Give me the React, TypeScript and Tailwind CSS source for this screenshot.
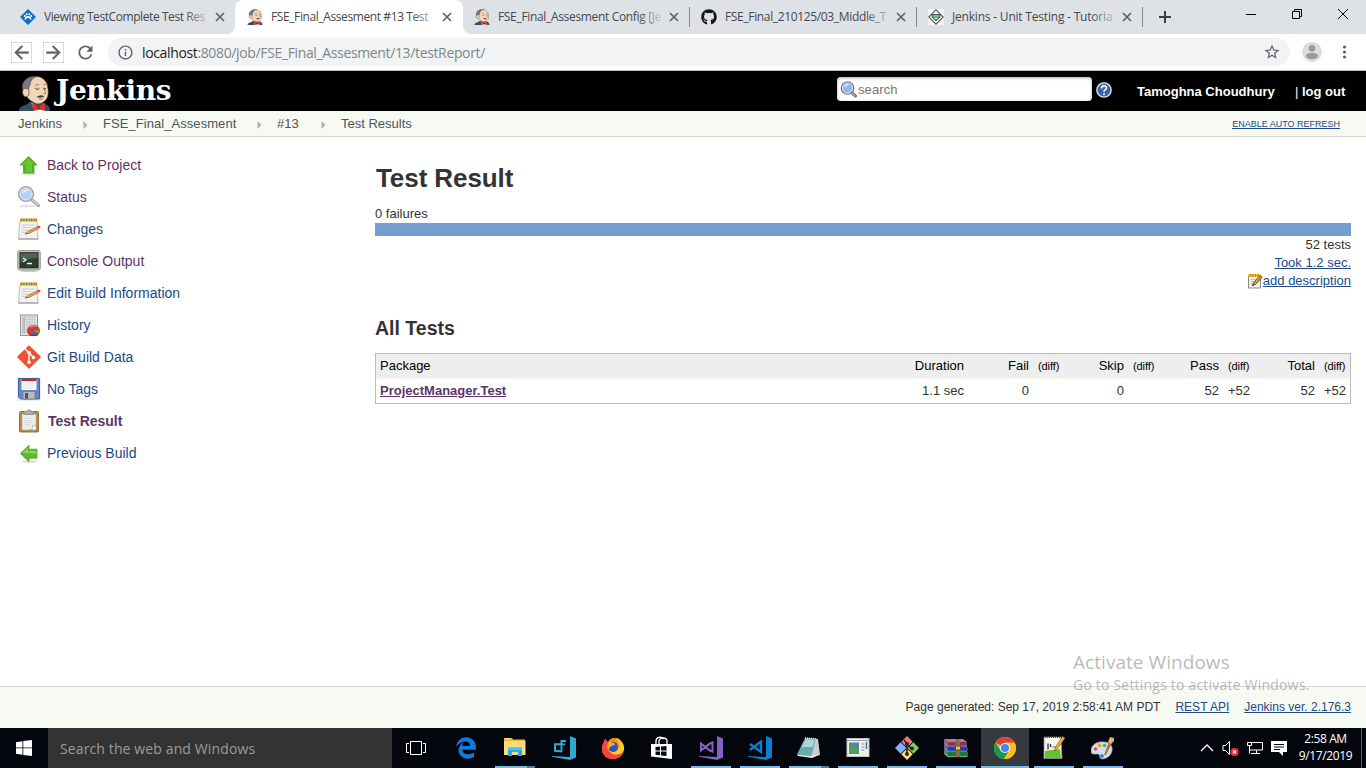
import React from "react";
import { FaGithub, FaEdgeLegacy } from "react-icons/fa";
import { MdRefresh, MdArrowBack, MdArrowForward, MdStarBorder, MdInfoOutline } from "react-icons/md";

const CloseX = ({ className = "" }: { className?: string }) => (
  <svg className={`shrink-0 ${className}`} width="10" height="10" viewBox="0 0 10 10" stroke="#5f6368" strokeWidth="1.7">
    <path d="M1 1l8 8M9 1l-8 8" />
  </svg>
);

const JenkinsFace = ({ w, h }: { w: number; h: number }) => (
  <svg width={w} height={h} viewBox="0 0 34 36" className="shrink-0" preserveAspectRatio="none">
    <path d="M1 36c0-3 3-5.500 7-6l5-3.500 13 1.500c4 1 7 3 7 8z" fill="#335061" />
    <path d="M10 23C5 16 6 6 12 2.500c7-3 15-.5 18 6.500 1.500 6 2 12-1 15.500-3 4-8 5.500-12 3.500-3-1.500-5-3-7-5z" fill="#f0d6b7" stroke="#3a302c" strokeWidth=".6" />
    <path d="M6 17C3 13 4 7 9 3.500c3-2 8-2.500 12-2-5 .5-8 3-8.500 8C12 12 10.500 12 10.500 17z" fill="#7b787b" stroke="#3a302c" strokeWidth=".5" />
    <path d="M7 13.500c-3.500 1-3 7.500 1.200 8.500l3-2v-5c-.7-1.500-2.700-2-4.200-1.500z" fill="#f0d6b7" stroke="#3a302c" strokeWidth=".6" />
    <path d="M17.500 10.500c1.500-1.200 3-1.200 4.300-.3M26 10c1-.9 2.300-.9 3.200 0M27 13.500c0 2.500 2.300 3.700 1.500 4.900-.7.8-2 .3-2.500.2" fill="none" stroke="#6b594c" strokeWidth=".7" />
    <path d="M17.800 13.200c1.300 1.400 3 1.400 4.200.2M26 13c.9 1.200 2.200 1.200 3 .2" fill="none" stroke="#2c2523" strokeWidth="1" />
    <path d="M19 21.500c1.500.2 3-1.500 5-1.300 1.300.1 2 .8 3.200.8-1 1.900-6 2.500-8.200.5z" fill="#4a3f40" />
    <path d="M21.500 23.800c1.500.8 3 .8 4-.2" fill="none" stroke="#81504c" strokeWidth=".8" />
    <path d="M14 28l7 3.500 6-3 1 7.500H16z" fill="#f7f4f1" />
    <path d="M15 29l6 2.300L28 28.500l.5 7-6.500-1.500L15.500 35.500z" fill="#e0332c" stroke="#8c1a1d" strokeWidth=".6" />
    <path d="M20 30.500h3v4h-3z" fill="#b5221f" />
  </svg>
);

const Diamond = () => (
  <svg width="16" height="16" viewBox="0 0 16 16" className="shrink-0">
    <path d="M8 0l8 8-8 8-8-8z" fill="#0c6fc0" />
    <path d="M4.500 10.500c0-2 1.500-3.500 3.500-3.500s3.500 1.500 3.500 3.500H9.800a1.800 1.800 0 0 0-3.600 0z" fill="#fff" />
    <circle cx="4.800" cy="7" r="1" fill="#fff" /><circle cx="6.700" cy="5.300" r="1" fill="#fff" /><circle cx="9.300" cy="5.300" r="1" fill="#fff" /><circle cx="11.200" cy="7" r="1" fill="#fff" />
  </svg>
);

const TutorialIcon = () => (
  <svg width="16" height="16" viewBox="0 0 16 16" className="shrink-0">
    <rect width="16" height="16" fill="#f4f4f4" />
    <path d="M8 .8L15.200 8 8 15.200.8 8z" fill="#fff" stroke="#555" strokeWidth="1.100" />
    <path d="M4 5.500h8v2.500L8 12 4 8z" fill="#5c8f6c" stroke="#2c4a38" strokeWidth=".8" />
    <path d="M5.500 7h2M8.500 7h2M6.500 9.300h3" stroke="#e8f2ea" strokeWidth="1" />
  </svg>
);

type TabProps = { icon: React.ReactNode; title: string; outer: string; text: string; track: string; fade: string };
const Tab = ({ icon, title, outer, text, track, fade }: TabProps) => (
  <div className={`flex h-[34px] shrink-0 items-center ${outer}`}>
    {icon}
    <div className={`relative ml-2 h-5 whitespace-nowrap text-[12px] leading-5 text-[#45494d] ${text} ${track}`}>
      {title}
      <span className={`absolute right-0 top-0 h-5 w-6 bg-linear-to-r from-transparent ${fade}`} />
    </div>
    <CloseX className="ml-[7px]" />
  </div>
);

const Up = () => (
  <svg width="24" height="24" viewBox="0 0 24 24">
    <ellipse cx="12" cy="21" rx="8" ry="1.500" fill="#ddd" />
    <path d="M11.500 3.500L20 12h-3v8H6.500v-8H3z" fill="#52b01d" stroke="#4ba41c" strokeWidth=".8" />
    <path d="M11.500 5L17 11h-2v8H8.500v-7l-4-.8z" fill="#86d64b" opacity=".5" />
  </svg>
);
const Left = () => (
  <svg width="24" height="24" viewBox="0 0 24 24">
    <ellipse cx="13" cy="20.500" rx="8" ry="1.300" fill="#ddd" />
    <path d="M3.300 12.500l8.700-8.300v4h8v9h-8v3.500z" fill="#5fb52c" stroke="#57a32a" strokeWidth=".8" />
    <path d="M5 12l6-5.500V10h8.500v2.500z" fill="#9bdc6c" opacity=".75" />
  </svg>
);
const Magnifier = () => (
  <svg width="24" height="24" viewBox="0 0 24 24" className="shrink-0">
    <ellipse cx="10" cy="21" rx="8" ry="1.400" fill="#e4e4e4" />
    <path d="M14.500 14.500l7 6" stroke="#a2a3a0" strokeWidth="3.400" strokeLinecap="round" />
    <path d="M15.500 15l5.500 4.800" stroke="#dadad8" strokeWidth="1.400" strokeLinecap="round" />
    <circle cx="9" cy="9" r="7.300" fill="#b3d1f3" stroke="#a3a6a3" strokeWidth="1.600" />
    <circle cx="9" cy="9" r="6" fill="none" stroke="#e5effb" strokeWidth="1" />
    <path d="M5 9c0-3 2-4.500 5-4.500 1 0 2 .5 2.500 1C9 6 7 7 5 9z" fill="#e3effd" />
  </svg>
);
const SearchGlass = () => (
  <svg width="17" height="17" viewBox="0 0 17 17" className="shrink-0">
    <path d="M11.500 11.500l4 3.500" stroke="#777" strokeWidth="3" strokeLinecap="round" />
    <path d="M12 12l3 2.600" stroke="#ccc" strokeWidth="1" />
    <circle cx="7.500" cy="7" r="6.200" fill="#8fbaf0" stroke="#777a7b" strokeWidth="1.300" />
    <circle cx="7.500" cy="7" r="5.100" fill="none" stroke="#dbe8f8" strokeWidth=".9" />
    <path d="M4 6.500c0-2 2-3.500 4.500-3.500C9 4.500 6 4.500 4 6.500z" fill="#dbeafd" />
  </svg>
);
const Notepad = () => (
  <svg width="24" height="24" viewBox="0 0 24 24" className="shrink-0">
    <path d="M3 3.500h17l1 18.500H1.500z" fill="#f1f1ef" stroke="#bdbfba" strokeWidth="1" />
    <path d="M1.500 22h20" stroke="#92948f" strokeWidth="1" />
    <path d="M3 1.500h17v2.800H3z" fill="#c5ad45" />
    <path d="M4.500 1.500v3M7 1.500v3M9.500 1.500v3M12 1.500v3M14.500 1.500v3M17 1.500v3M19.300 1.500v3" stroke="#85732c" strokeWidth=".8" />
    <path d="M5 8h12M5 10.500h9M5 13h6M4.500 15.500h4" stroke="#cfd1cd" />
    <path d="M8.500 16.800l2.700-2.600L20.500 9.500l1.200 1.900-9.400 5z" fill="#dfa050" stroke="#9f6d2c" strokeWidth=".6" />
    <path d="M20.300 9.600l1.700-.9c1.300-.2 2 1 1.200 1.900l-1.700.9z" fill="#e0452f" />
    <path d="M8 17.200l1.400-1.400.8 1z" fill="#222" />
  </svg>
);
const SmallNotepad = () => (
  <svg width="16" height="16" viewBox="0 0 16 16" className="shrink-0">
    <path d="M1.500 2.500h12v12.500h-12z" fill="#efefee" stroke="#8a8c88" />
    <path d="M1.500 1h12v3h-12z" fill="#f0bd27" />
    <path d="M3.500 1v2.500M6 1v2.500M8.500 1v2.500M11 1v2.500" stroke="#a77c10" />
    <path d="M3.500 6.500h7M3.500 8.500h5M3.500 10.500h3" stroke="#c4c5c2" />
    <path d="M5.500 12.500l1.500-3.300L13 2.500l2.200 1.800-6.500 7z" fill="#d99c3b" stroke="#503b17" strokeWidth=".8" />
    <path d="M5 13l1-2 1 1z" fill="#111" />
  </svg>
);
const Console = () => (
  <svg width="24" height="24" viewBox="0 0 24 24">
    <ellipse cx="12" cy="22" rx="9" ry="1.200" fill="#ccc" />
    <rect x=".7" y="1.500" width="22.600" height="19.500" rx="2" fill="#c3c4bc" stroke="#9b9c96" />
    <rect x="3" y="3.800" width="18" height="15" fill="#2c3d31" stroke="#161f19" />
    <path d="M3.500 4.300h17v5C14 9 8 11 3.500 14z" fill="#50634f" />
    <path d="M6 9l3 2-3 2M10 14.500h5" fill="none" stroke="#e9f6e5" strokeWidth="1.300" />
  </svg>
);
const History = () => (
  <svg width="24" height="24" viewBox="0 0 24 24">
    <rect x="3.500" y="2" width="17" height="20.500" fill="#e6e7e4" stroke="#939590" />
    <path d="M5 4h14M5 6.500h14M5 9h14M5 11.500h14M5 14h7M5 16.500h5M5 19h5M7.500 3v18M10 3v18M12.500 3v10M15 3v9M17.500 3v9" stroke="#c3c5c1" strokeWidth=".8" />
    <path d="M5 4v16.500h3V4z" fill="#999b97" opacity=".35" />
    <ellipse cx="16.500" cy="18.200" rx="6.300" ry="5" fill="#a51313" />
    <ellipse cx="16.500" cy="17" rx="6.300" ry="5" fill="#dd3a37" />
    <path d="M12 14.500c2-2.500 6-2.500 8-1-2 0-5 .5-8 1z" fill="#f08a86" />
    <path d="M16 17.500l4 3.500c-2 1.500-3.500 1.500-5 1z" fill="#3c68b0" /><path d="M16.500 17.300h6c0 1.500-.8 2.500-1.800 3.200z" fill="#69a83c" />
  </svg>
);
const GitIcon = () => (
  <svg width="24" height="24" viewBox="0 0 24 24">
    <path d="M12 .8L23.200 12 12 23.200.8 12z" fill="#f05133" stroke="#f05133" strokeWidth="1.200" strokeLinejoin="round" />
    <path d="M8 3.800l4 4.200v9.500M12 8l4.300 4.300" stroke="#fff" strokeWidth="1.400" fill="none" />
    <circle cx="12" cy="7.800" r="1.800" fill="#fff" /><circle cx="12" cy="17.300" r="1.800" fill="#fff" /><circle cx="16.500" cy="12.500" r="1.800" fill="#fff" />
  </svg>
);
const Floppy = () => (
  <svg width="24" height="24" viewBox="0 0 24 24">
    <rect width="24" height="24" fill="#eeeef1" />
    <path d="M1.500 1.500h21v20.500H3.500l-2-2z" fill="#6488c6" stroke="#4560a0" />
    <rect x="4.500" y="2" width="15" height="11" fill="#fafafa" /><rect x="4.500" y="2" width="15" height="2" fill="#ea1d12" />
    <path d="M6 7h12M6 9h12M6 11h12" stroke="#e2e2e2" strokeWidth=".8" />
    <rect x="6" y="14.500" width="12" height="7.500" fill="#b9bcb8" stroke="#777" strokeWidth=".7" /><rect x="8" y="16" width="3" height="5.500" fill="#39558c" />
  </svg>
);
const Clipboard = () => (
  <svg width="24" height="24" viewBox="0 0 24 24">
    <rect x="2.500" y="2.500" width="19" height="20.500" rx="1" fill="#b98a3c" stroke="#8b5e18" strokeWidth=".8" />
    <rect x="5" y="5" width="14" height="16" fill="#ecedea" stroke="#aaa" strokeWidth=".6" />
    <path d="M19 16v5h-6.500c3 0 3.500-1 3-4.500 1.500 1 3 .4 3.500-.5z" fill="#fff" stroke="#999" strokeWidth=".6" />
    <path d="M7.500 9.500h8M7.500 11.500h8M7.500 13.500h7M7.500 15.500h6" stroke="#d6d7d4" strokeWidth=".8" />
    <path d="M7 5.500V2.500h3c0-2.500 4-2.500 4 0h3v3z" fill="#a9aca6" stroke="#8a8d86" strokeWidth=".8" />
  </svg>
);

const tasks = [
  { icon: <Up />, label: "Back to Project", style: "text-[#5c3566]" },
  { icon: <Magnifier />, label: "Status", style: "text-[#5c3566]" },
  { icon: <Notepad />, label: "Changes", style: "text-[#204a87]" },
  { icon: <Console />, label: "Console Output", style: "text-[#5c3566]" },
  { icon: <Notepad />, label: "Edit Build Information", style: "text-[#204a87]" },
  { icon: <History />, label: "History", style: "text-[#204a87]" },
  { icon: <GitIcon />, label: "Git Build Data", style: "text-[#204a87]" },
  { icon: <Floppy />, label: "No Tags", style: "text-[#204a87]" },
  { icon: <Clipboard />, label: "Test Result", style: "font-bold text-[#5c3566] pl-px" },
  { icon: <Left />, label: "Previous Build", style: "text-[#204a87]" },
];

const Crumb = () => (
  <svg width="5" height="8" viewBox="0 0 5 8" className="mt-0.5 shrink-0"><path d="M.5 0L4.500 4 .5 8z" fill="#b0b2ad" /></svg>
);

const S = ({ children }: { children: React.ReactNode }) => <svg width="24" height="24" viewBox="0 0 24 24">{children}</svg>;

const apps: { icon: React.ReactNode; bar: "none" | "one" | "two" | "active" }[] = [
  { bar: "none", icon: <FaEdgeLegacy size={22} color="#0f7bdc" /> },
  { bar: "two", icon: <S><path d="M1 2h8l1 1.500h12V19H1z" fill="#e8b536" /><path d="M1 5h21.500v14H1z" fill="#fddc7c" /><path d="M2 2.800h5" stroke="#fff3c4" /><path d="M5 11.500h14V20h-4v-4H9v4H5z" fill="#29a9e6" /><path d="M5 11.500h14V14H5z" fill="#4cc3f3" /></S> },
  { bar: "none", icon: <S><path d="M18 0l6 2.500v19L18 24 0 20.800v-.7l18 1z" fill="#31a8cf" /><path d="M9.500 8.300H3v6.500l6.500.5V5H14" fill="none" stroke="#31a8cf" strokeWidth="2" /><path d="M9 8.300h4" stroke="#31a8cf" strokeWidth="1.800" /></S> },
  { bar: "none", icon: <S>
    <path d="M2 8l2-5 3 3c2-4 6-5 9-3l1-1c4 3 7 7 6 12-1 6-6 9-11 9S1 19 1 14c0-2 0-4 1-6z" fill="#ff8a16" />
    <path d="M2 8l2-5 3 4c-3 4 0 10 5 10 3 0 5-2 6-4l3 4c-2 4-6 6-10 6-6 0-10-5-10-10z" fill="#f8423f" />
    <circle cx="12" cy="11" r="5" fill="#2856c8" /><path d="M8 6l5 1 1 2-4 1-3 4c-1-3 0-6 1-8z" fill="#ffac25" />
    <path d="M14 1.500c4 4 5 8 3 12-1 3-6 4-9 1 5 8 15 3 15-2 0-5-4-9-9-11z" fill="#ffcb2b" />
  </S> },
  { bar: "none", icon: <S><path d="M1 8h21v15L1 20.500z" fill="#fff" /><path d="M6 9V5c0-4 5-5 8-2M9 8V5c0-4 8-4 8 0v3" fill="none" stroke="#fff" strokeWidth="1.300" /><path d="M5.500 11l4.500-.4v3.900H5.500zM11 10.500l5.500-.5v4.500H11zM5.500 15.400H10v3.900l-4.500-.5zM11 15.400h5.500v4.600L11 19.400z" fill="#05070c" /></S> },
  { bar: "one", icon: <S><path d="M18 0l6 2.500v19L18 24 0 20.800v-.7l18 1z" fill="#8661c5" /><path d="M2 7.500l9 7 2.500 1V6.500L11 7.500 2 14.500z" fill="none" stroke="#8661c5" strokeWidth="2" /></S> },
  { bar: "one", icon: <S><path d="M18 0l6 2.500v19L18 24 0 20.800v-.7l18 1z" fill="#0b80d0" /><path d="M2 8l11 8V5.500L2 14" fill="none" stroke="#0b80d0" strokeWidth="2.300" /></S> },
  { bar: "two", icon: <S><path d="M9 2l12 1 2 16-9 2.500z" fill="#c9cfcc" /><path d="M8 2l11 1-5 18L0 18.500z" fill="#6aa9ae" /><path d="M9 3l9 1-2.500 7-11 0z" fill="#a9d5d6" /><path d="M0 18.500l14 1.800 9-2-8 3.700L1 20z" fill="#e9efed" /><path d="M8 2l12 1" stroke="#eee" strokeWidth="1.500" strokeDasharray="1 1" /></S> },
  { bar: "one", icon: <S><rect x="1" y="2.500" width="22" height="18" fill="#f0f1ef" stroke="#bfc1bf" /><path d="M1 4.500h22" stroke="#9da1a2" /><rect x="3" y="6.500" width="10" height="11.500" fill="#4d88a2" /><path d="M3 10c4-1 8 1 10 4v4H3z" fill="#4f9c5c" /><path d="M15.500 8h3M15.500 11h3M15.500 14h3" stroke="#a9afb1" strokeWidth="1.300" /><path d="M20.500 6v7" stroke="#3b6fb1" strokeWidth="1.500" /></S> },
  { bar: "one", icon: <S><path d="M12 0l5.700 5.700L12 11.400 6.300 5.700z" fill="#f27878" /><path d="M5.700 6.300L11.400 12l-5.700 5.700L0 12z" fill="#80b3ff" /><path d="M18.300 6.300L24 12l-5.700 5.700-5.700-5.700z" fill="#85cd60" /><path d="M12 12.600l5.700 5.700L12 24l-5.700-5.700z" fill="#ffdf73" /><path d="M9 4l3 3.500v11M12 8l5 5" stroke="#262626" strokeWidth="1.600" fill="none" /><circle cx="12" cy="8" r="2" fill="#262626" /><circle cx="12" cy="18" r="2" fill="#262626" /><circle cx="17" cy="12.500" r="2" fill="#262626" /></S> },
  { bar: "one", icon: <S><path d="M0 3l4 3h19v4H4L0 8z" fill="#8c2f6f" /><path d="M0 9l4 2h20v4H4L0 13z" fill="#2436c8" /><path d="M0 14l4 2h20v5H4L0 18z" fill="#177a38" /><path d="M0 3h19l4 3H4z" fill="#b9779a" /><path d="M0 3l4 3v15L0 18z" fill="#8d8a86" opacity=".6" /><path d="M1 8l3 2.300h19M1 13l3 2.300h19M1 18l3 2.700h19" stroke="#c0bbaa" strokeWidth=".8" fill="none" /><path d="M11.500 3h3.500l1 3v15h-4z" fill="#8a6a48" /><path d="M11.500 10h5v4h-5z" fill="#e6c767" stroke="#6d461b" /></S> },
  { bar: "active", icon: <S><circle cx="12" cy="12" r="11" fill="#fbc116" /><path d="M12 12L2.500 6.500A11 11 0 0 1 21.600 6.700H12z" fill="#db4437" /><path d="M12 12L7.500 14.500 2.500 6.500A11 11 0 0 0 11 23l5-8.500z" fill="#109d58" /><path d="M12 6.700h9.600A11 11 0 0 1 11 23l5.500-8.500z" fill="#fbc116" /><circle cx="12" cy="12" r="5.100" fill="#f1f1f1" /><circle cx="12" cy="12" r="4" fill="#4285f4" /></S> },
  { bar: "one", icon: <S><path d="M2 1h17l1 21.500H2z" fill="#f5f5ee" stroke="#888" strokeWidth=".7" /><path d="M3 15l15-2 1 9H3z" fill="#67c02c" /><path d="M3 1.500h16" stroke="#444" strokeDasharray="1 1" /><path d="M6 7.500v6M8.500 8v3M11 10.500v1M13 10.500v1" stroke="#333" strokeWidth="1.300" /><path d="M12.500 15l1-4L20.500 .5l2.500 1.500-7.500 10.500z" fill="#f0b428" stroke="#83540e" strokeWidth=".7" /></S> },
  { bar: "one", icon: <S><path d="M0 15C0 9 6 5 13 6c6 0 9 4 8 9s-6 8-10 8c-4-1-1-5-4-5-4 0-7 1-7-3z" fill="#c7e2f2" stroke="#86a6bb" strokeWidth=".7" /><circle cx="4.500" cy="13" r="1.800" fill="#e74e3d" /><circle cx="8.500" cy="9.500" r="1.900" fill="#f1a22e" /><circle cx="13.500" cy="9.500" r="1.700" fill="#57aa47" /><circle cx="11" cy="20" r="1.800" fill="#3270c8" /><path d="M13 19l5-13 3 1-6 12z" fill="#b96f27" /><path d="M17 6l2-5 4 1v3l-3 3z" fill="#e3b174" /></S> },
];

const cols = "grid grid-cols-[528px_65px_65px_30px_65px_30px_65px_30px_66px_30px] items-center";
const head = ["Duration", "Fail", "(diff)", "Skip", "(diff)", "Pass", "(diff)", "Total", "(diff)"];
const row = ["1.1 sec", "0", "", "0", "", "52", "+52", "52", "+52"];

export default function App() {
  return (
    <div className="relative flex h-[768px] w-[1366px] flex-col overflow-hidden bg-white font-['Liberation_Sans',Arial,sans-serif] text-[13px] text-[#333]">
      <header className="shrink-0 font-['Open_Sans','Noto_Sans',sans-serif]">
        <div className="flex h-[34px] bg-[#dee1e6]">
          <div className="h-[34px] w-[235px] shrink-0 bg-white">
            <Tab icon={<Diamond />} title="Viewing TestComplete Test Res" outer="w-[235px] rounded-br-lg bg-[#dee1e6] pl-5" text="w-[164px]" track="tracking-[-0.42px]" fade="to-[#dee1e6]/80" />
          </div>
          <Tab icon={<JenkinsFace w={16} h={16} />} title="FSE_Final_Assesment #13 Test" outer="w-[228px] rounded-t-lg bg-white pl-3" text="w-[164px]" track="tracking-[-0.4px]" fade="to-white/70" />
          <div className="h-[34px] w-[226px] shrink-0 bg-white">
            <Tab icon={<JenkinsFace w={16} h={16} />} title="FSE_Final_Assesment Config [Je" outer="w-[226px] rounded-bl-lg bg-[#dee1e6] pl-[11px]" text="w-[164px]" track="tracking-[-0.33px]" fade="to-[#dee1e6]/90" />
          </div>
          <div className="mt-[7px] h-5 w-px bg-[#85888c]" />
          <Tab icon={<FaGithub size={16} color="#191717" />} title="FSE_Final_210125/03_Middle_T" outer="w-[226px] pl-[11px]" text="w-[164px]" track="tracking-[-0.35px]" fade="to-[#dee1e6]/80" />
          <div className="mt-[7px] h-5 w-px bg-[#85888c]" />
          <Tab icon={<TutorialIcon />} title="Jenkins - Unit Testing - Tutoria" outer="w-[225px] pl-[11px]" text="w-[163px]" track="tracking-[-0.2px]" fade="to-[#dee1e6]/80" />
          <div className="mt-[7px] h-5 w-px bg-[#85888c]" />
          <svg className="ml-4 mt-[11px]" width="12" height="12" viewBox="0 0 12 12" stroke="#3c4043" strokeWidth="2"><path d="M6 0v12M0 6h12" /></svg>
          <svg className="ml-auto mr-[17px] mt-2" width="104" height="13" viewBox="0 0 104 13" fill="none" stroke="#000">
            <path d="M1 6.500h10M47.500 3.500h7v7h-7zM49.500 3.500v-2h7v7h-2M93 1l10 10M103 1L93 11" />
          </svg>
        </div>
        <div className="flex h-9 items-center bg-white text-[#5f6368]">
          <MdArrowBack size={21} className="ml-[11px] stroke-current stroke-[0.5]" /><MdArrowForward size={21} className="ml-[11px] stroke-current stroke-[0.5]" /><MdRefresh size={21} className="ml-[11px]" />
          <div className="ml-3 flex h-7 w-[1182px] items-center rounded-full bg-[#f1f3f4]">
            <MdInfoOutline size={17} className="ml-[9px]" />
            <span className="mt-0.5 ml-2 text-[14px] leading-5 tracking-[-0.36px] text-[#80868b]"><span className="text-[#202124]">localhost</span>:8080/job/FSE_Final_Assesment/13/testReport/</span>
            <MdStarBorder size={18} className="ml-auto mr-[9px]" />
          </div>
          <svg className="ml-3" width="20" height="20" viewBox="0 0 20 20"><circle cx="10" cy="10" r="10" fill="#dcdcdc" /><circle cx="10" cy="6.300" r="3.200" fill="#9a9a9a" /><ellipse cx="10" cy="14" rx="6" ry="3.200" fill="#9a9a9a" /></svg>
          <svg className="ml-5" width="5" height="14" viewBox="0 0 5 14" fill="#5f6368"><circle cx="2.500" cy="2" r="1.600" /><circle cx="2.500" cy="7" r="1.600" /><circle cx="2.500" cy="12" r="1.600" /></svg>
        </div>
        <div className="h-px bg-[#b8bcb8]" />
      </header>

      <div className="flex h-10 shrink-0 items-center bg-black pl-[18px] font-bold text-white">
        <div className="mt-1 self-start"><JenkinsFace w={33} h={36} /></div>
        <span className="-mt-px ml-[5px] w-[120px] font-['DejaVu_Serif',serif] text-[28px] leading-9 tracking-[-0.35px]">Jenkins</span>
        <div className="-mt-1 ml-[661px] flex h-6 w-[255px] items-center rounded bg-white pl-[3px] font-normal text-[#757575] shadow-[inset_0_1px_3px_#aaa]">
          <SearchGlass /><span className="ml-px mt-0.5 tracking-[0.1px]">search</span>
        </div>
        <svg className="-mt-[3px] ml-1" width="16" height="16" viewBox="0 0 15 15"><circle cx="7.500" cy="7.500" r="6.700" fill="#3465a4" stroke="#dfe6ef" strokeWidth="1.300" /><path d="M5.200 6c0-3 4.600-3 4.600-.4C9.800 7.300 7.500 7 7.500 9.200M7.500 10.500v1.700" fill="none" stroke="#fff" strokeWidth="1.600" /></svg>
        <span className="ml-[25px] mt-0.5 w-[158px]">Tamoghna Choudhury</span>
        <span className="mt-0.5"><span className="font-normal">| </span>log out</span>
      </div>

      <nav className="flex h-[26px] shrink-0 items-center border-b border-[#d3d7cf] bg-[#f6faf2] pl-[18px] text-[13px] text-[#4d545d]">
        <span className="w-[65px]">Jenkins</span><Crumb />
        <span className="ml-[15px] w-[154px] tracking-[0.06px]">FSE_Final_Assesment</span><Crumb />
        <span className="ml-[15px] w-[44px]">#13</span><Crumb />
        <span className="ml-[15px]">Test Results</span>
        <a className="ml-auto mr-[26px] mt-0.5 text-[9px] text-[#204a87] underline">ENABLE AUTO REFRESH</a>
      </nav>

      <div className="flex min-h-0 flex-1">
        <aside className="flex w-[375px] shrink-0 flex-col pl-[17px] pt-3">
          {tasks.map((t) => (
            <div key={t.label} className="flex h-8 items-center gap-1.5 text-[14px]">
              {t.icon}<a className={t.style}>{t.label}</a>
            </div>
          ))}
        </aside>
        <main className="w-[976px]">
          <h1 className="mt-6 pl-px text-[26px] font-bold leading-[34px] tracking-[-0.08px]">Test Result</h1>
          <div className="mt-[9px] leading-[19px]">0 failures</div>
          <div className="h-[13px] bg-[#729fcf]" />
          <div className="flex flex-col items-end leading-[18px]">
            <span>52 tests</span>
            <a className="text-[#204a87] underline">Took 1.2 sec.</a>
            <span className="flex items-center"><SmallNotepad /><a className="text-[#204a87] underline">add description</a></span>
          </div>
          <h2 className="mt-[26px] text-[19.5px] font-bold leading-6">All Tests</h2>
          <div className="mt-[13px] border border-[#bbb]">
            <div className={`h-[25px] border-b border-[#f6f6f6] bg-[#eee] text-black ${cols}`}>
              <span className="pl-1">Package</span>
              {head.map((h, i) => <span key={i} className={h === "(diff)" ? "pl-1 text-[11px] tracking-[-0.1px]" : "pr-[5px] text-right"}>{h}</span>)}
            </div>
            <div className={`h-6 ${cols}`}>
              <a className="pl-1 font-bold text-[#5c3566] underline">ProjectManager.Test</a>
              {row.map((v, i) => <span key={i} className={i > 1 && i % 2 === 0 ? "pl-1" : "pr-[5px] text-right"}>{v}</span>)}
            </div>
          </div>
        </main>
      </div>

      <footer className="flex h-[42px] shrink-0 items-center justify-end border-t border-[#d3d7cf] bg-[#f6faf2] pb-0.5 pr-[15px] text-[12px]">
        <span>Page generated: Sep 17, 2019 2:58:41 AM PDT</span>
        <a className="ml-[15px] text-[#204a87] underline">REST API</a>
        <a className="ml-[15px] text-[#204a87] underline">Jenkins ver. 2.176.3</a>
      </footer>

      <div className="absolute left-[1073px] top-[650px] whitespace-nowrap font-['Open_Sans','Noto_Sans',sans-serif] text-[#8a8a8a]/60">
        <div className="text-[19px] leading-6 tracking-[0.05px]">Activate Windows</div>
        <div className="text-[14px] leading-[22px] tracking-[0.2px]">Go to Settings to activate Windows.</div>
      </div>

      <div className="flex h-10 shrink-0 items-center bg-[#03060c] font-['Open_Sans','Noto_Sans',sans-serif] text-white">
        <div className="flex h-10 w-12 items-center justify-center">
          <svg width="16" height="16" viewBox="0 0 16 16" fill="#fff"><path d="M0 2.200L6.500 1.200v6.300H0zM7.300 1.100L16 0v7.500H7.300zM0 8.300h6.500v6.500L0 13.800zM7.300 8.300H16V16l-8.700-1.100z" /></svg>
        </div>
        <div className="flex h-10 w-[344px] items-center bg-[#333] pl-3 text-[14px] tracking-[0.12px] text-[#9b9b9b]">Search the web and Windows</div>
        <div className="flex w-[49px] pl-3.5">
          <svg width="20" height="15" viewBox="0 0 20 15" fill="none" stroke="#fff"><path d="M4.500 .5h11v13h-11zM3 2.500H.5v9H3M17 2.500h2.500v9H17" /></svg>
        </div>
        {apps.map((a, i) => (
          <div key={i} className="flex h-10 w-[49px] shrink-0 flex-col pl-px">
            <div className={`flex h-[38px] items-center justify-center pt-0.5 ${a.bar === "active" ? "bg-[#36393d]" : ""}`}>{a.icon}</div>
            {a.bar === "active" && <div className="h-0.5 bg-[#76b9ed]" />}
            {a.bar === "one" && <div className="mx-1 h-0.5 bg-[#76b9ed]" />}
            {a.bar === "two" && <div className="mx-1 flex h-0.5 bg-[#76b9ed]"><span className="ml-auto w-2 bg-[#4f7da2]" /></div>}
          </div>
        ))}
        <svg className="ml-[73px]" width="88" height="18" viewBox="0 0 88 18" fill="none" stroke="#fff">
          <path d="M1 12l6-6 6 6" strokeWidth="1.300" />
          <path d="M23 6.500h2.500l4-4v13l-4-4H23z" />
          <circle cx="34.500" cy="13" r="4.300" fill="#e22535" stroke="none" /><path d="M32.800 11.300l3.400 3.400M36.200 11.300l-3.400 3.400" strokeWidth="1.200" />
          <path d="M52 3.500h10.500v7.500H50M56.500 11v3.500M51 14.500h9M47.500 3.500h4v3h-4zM49.500 6.500v8" />
          <path d="M71 2h16v11h-4v4l-4-4h-8z" fill="#fff" stroke="none" /><path d="M74 5.500h10M74 8h10M74 10.500h6" stroke="#05070c" />
        </svg>
        <div className="-mt-0.5 ml-[10px] flex w-[55px] flex-col items-center whitespace-nowrap text-[12px] leading-[17px] tracking-[-0.38px]">
          <span>2:58 AM</span><span>9/17/2019</span>
        </div>
        <div className="ml-auto mr-1 h-10 w-px bg-[#5c5f63]" />
      </div>
    </div>
  );
}
